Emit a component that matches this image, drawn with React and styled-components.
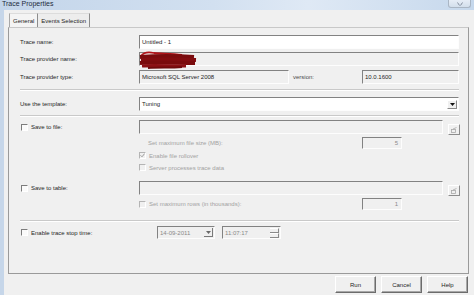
import React from "react";
import styled, { createGlobalStyle } from "styled-components";

const GlobalStyle = createGlobalStyle`
  html, body {
    margin: 0;
    padding: 0;
    background: #f0f0f0;
  }
  body {
    font-family: "Liberation Sans", Arial, sans-serif;
    font-size: 6px;
    color: #1e1e1e;
  }
`;

const Check = ({ checked, disabled }) => (
  <CheckBox $disabled={disabled}>
    {checked ? (
      <svg width="5" height="5" viewBox="0 0 5 5">
        <path d="M0.5 2.3 L2 3.8 L4.6 0.6" fill="none" stroke={disabled ? "#9c9c9c" : "#222"} strokeWidth="1" />
      </svg>
    ) : null}
  </CheckBox>
);

const Scribble = () => (
  <ScribbleSvg width="60" height="19" viewBox="0 0 60 19">
    <path d="M3 5 C6 1, 12 1, 16 2 C24 3, 34 2, 44 4" fill="none" stroke="#b3141a" strokeWidth="1.8" />
    <path d="M2 6 C14 5, 30 4, 56 6" fill="none" stroke="#7a0c0e" strokeWidth="4" />
    <path d="M3 9 C16 8, 36 8, 58 9" fill="none" stroke="#820d10" strokeWidth="4" />
    <path d="M2 12 C18 11, 40 12, 57 12" fill="none" stroke="#7a0b0d" strokeWidth="4" />
    <path d="M4 15 C14 14, 30 15, 48 15" fill="none" stroke="#8b1014" strokeWidth="3.2" />
    <path d="M10 17 C20 16, 32 17, 44 16" fill="none" stroke="#6f0a0c" strokeWidth="2" />
  </ScribbleSvg>
);

const BrowseIcon = () => (
  <svg width="6" height="6" viewBox="0 0 6 6">
    <rect x="0.5" y="2.5" width="4" height="3" fill="none" stroke="#a8a8a8" strokeWidth="0.8" />
    <path d="M2 2 L5.5 0.5" stroke="#a8a8a8" strokeWidth="0.8" />
  </svg>
);

const App = () => {
  return (
    <>
      <GlobalStyle />
      <Window>
        <TitleBar>
          <Title>Trace Properties</Title>
          <CloseButton>
            <svg width="6" height="4" viewBox="0 0 6 4">
              <path d="M0.5 0.5 L2.5 3.5 M5.5 0.5 L3.5 3.5" stroke="#7a8594" strokeWidth="0.9" />
            </svg>
          </CloseButton>
        </TitleBar>
        <Body>
          <TabStrip>
            <Tab $active>General</Tab>
            <Tab>Events Selection</Tab>
          </TabStrip>
          <Panel>
            <Row>
              <Label>Trace name:</Label>
              <Field $white>Untitled - 1</Field>
            </Row>
            <Row $mt={3}>
              <Label>Trace provider name:</Label>
              <Field $visible>
                <Scribble />
              </Field>
            </Row>
            <Row $mt={4}>
              <Label>Trace provider type:</Label>
              <TypeGrid>
                <Field>Microsoft SQL Server 2008</Field>
                <SideLabel>version:</SideLabel>
                <Field>10.0.1600</Field>
              </TypeGrid>
            </Row>
            <Separator $mt={5} />
            <Row $mt={6}>
              <Label>Use the template:</Label>
              <Field $white>
                <FieldText>Tuning</FieldText>
                <DropButton>
                  <svg width="5" height="3" viewBox="0 0 5 3">
                    <path d="M0 0 H5 L2.5 3 Z" fill="#111" />
                  </svg>
                </DropButton>
              </Field>
            </Row>
            <Separator $mt={4} />
            <Row $mt={3}>
              <CheckLabel>
                <Check />
                Save to file:
              </CheckLabel>
              <BrowseLine>
                <Field />
                <BrowseButton>
                  <BrowseIcon />
                </BrowseButton>
              </BrowseLine>
            </Row>
            <Row $mt={3} $h={12}>
              <span />
              <SubGrid>
                <SubText $indent={9}>Set maximum file size (MB):</SubText>
                <Field $num>5</Field>
              </SubGrid>
            </Row>
            <Row $mt={1} $h={11}>
              <span />
              <SubCheck>
                <Check checked disabled />
                Enable file rollover
              </SubCheck>
            </Row>
            <Row $mt={1} $h={11}>
              <span />
              <SubCheck>
                <Check disabled />
                Server processes trace data
              </SubCheck>
            </Row>
            <Row $mt={8}>
              <CheckLabel>
                <Check />
                Save to table:
              </CheckLabel>
              <BrowseLine>
                <Field />
                <BrowseButton>
                  <BrowseIcon />
                </BrowseButton>
              </BrowseLine>
            </Row>
            <Row $mt={3} $h={12}>
              <span />
              <SubGrid>
                <SubCheck>
                  <Check disabled />
                  Set maximum rows (in thousands):
                </SubCheck>
                <Field $num>1</Field>
              </SubGrid>
            </Row>
            <Separator $mt={10} />
            <Row $mt={4} $h={13}>
              <CheckLabel>
                <Check />
                Enable trace stop time:
              </CheckLabel>
              <StopLine>
                <Field $w={58} $dim>
                  <FieldText>14-09-2011</FieldText>
                  <PickerButton>
                    <svg width="5" height="3" viewBox="0 0 5 3">
                      <path d="M0 0 H5 L2.5 3 Z" fill="#6a6a6a" />
                    </svg>
                  </PickerButton>
                </Field>
                <Field $w={59} $dim>
                  <FieldText>11:07:17</FieldText>
                  <Spinner>
                    <SpinHalf />
                    <SpinHalf />
                  </Spinner>
                </Field>
              </StopLine>
            </Row>
          </Panel>
          <Footer>
            <Button>Run</Button>
            <Button>Cancel</Button>
            <Button>Help</Button>
          </Footer>
        </Body>
      </Window>
    </>
  );
};

export default App;

const Window = styled.div`
  width: 474px;
  height: 295px;
  overflow: hidden;
  display: flex;
  flex-direction: column;
  background: #f0f0f0;
`;

const TitleBar = styled.div`
  height: 10px;
  display: flex;
  justify-content: space-between;
  align-items: flex-start;
  padding: 0 3px 0 2px;
  background: linear-gradient(to right, #c3d5ea 0%, #d2e0f0 45%, #dfe9f5 65%, #c6d8ec 100%);
`;

const Title = styled.div`
  font-size: 7px;
  line-height: 7px;
  color: #1b2a3c;
`;

const CloseButton = styled.div`
  width: 23px;
  height: 8px;
  box-sizing: border-box;
  border: 1px solid #aab6c4;
  border-top: none;
  border-radius: 0 0 3px 3px;
  background: linear-gradient(#e6edf6, #d3dfec);
  display: flex;
  justify-content: center;
  align-items: center;
`;

const Body = styled.div`
  flex: 1;
  display: flex;
  flex-direction: column;
  border-left: 4px solid #c6d6e9;
  padding: 3px 5px 0 4px;
`;

const TabStrip = styled.div`
  display: flex;
  height: 14px;
  margin-left: 1px;
`;

const Tab = styled.div`
  height: 14px;
  box-sizing: border-box;
  padding: 0 3px;
  display: flex;
  align-items: center;
  background: ${(p) => (p.$active ? "#f4f4f4" : "#ededed")};
  border-top: 1px solid #dcdcdc;
  border-left: ${(p) => (p.$active ? "1px solid #a8a8a8" : "none")};
  border-right: 1px solid #8c8c8c;
  color: #1e1e1e;
`;

const Panel = styled.div`
  height: 247px;
  box-sizing: border-box;
  border: 1px solid #9a9a9a;
  border-top-color: #c8c8c8;
  padding: 7px 9px 0 11px;
  display: flex;
  flex-direction: column;
`;

const Row = styled.div`
  display: grid;
  grid-template-columns: 119px 1fr;
  align-items: center;
  height: ${(p) => p.$h || 14}px;
  margin-top: ${(p) => p.$mt || 0}px;
`;

const Label = styled.div`
  color: #1e1e1e;
  white-space: nowrap;
`;

const CheckLabel = styled.div`
  display: flex;
  align-items: center;
  gap: 3px;
  padding-left: 1px;
  white-space: nowrap;
`;

const CheckBox = styled.span`
  width: 7px;
  height: 7px;
  box-sizing: border-box;
  flex: none;
  display: inline-flex;
  align-items: center;
  justify-content: center;
  border-top: 1px solid ${(p) => (p.$disabled ? "#b4b4b4" : "#7c7c7c")};
  border-left: 1px solid ${(p) => (p.$disabled ? "#b4b4b4" : "#7c7c7c")};
  border-right: 1px solid #ffffff;
  border-bottom: 1px solid #ffffff;
  background: ${(p) => (p.$disabled ? "#f0f0f0" : "#fafafa")};
`;

const Field = styled.div`
  position: relative;
  height: 100%;
  width: ${(p) => (p.$w ? `${p.$w}px` : "auto")};
  box-sizing: border-box;
  display: flex;
  align-items: center;
  justify-content: ${(p) => (p.$num ? "flex-end" : "flex-start")};
  padding: ${(p) => (p.$num ? "0 3px 0 2px" : "0 0 0 2px")};
  background: ${(p) => (p.$white ? "#ffffff" : "#f0f0f0")};
  border-top: 1px solid #828282;
  border-left: 1px solid #828282;
  border-right: 1px solid #fdfdfd;
  border-bottom: 1px solid #fdfdfd;
  color: ${(p) => (p.$num || p.$dim ? "#8a8a8a" : "#1e1e1e")};
  overflow: ${(p) => (p.$visible ? "visible" : "hidden")};
  white-space: nowrap;
`;

const FieldText = styled.span`
  flex: 1;
`;

const ScribbleSvg = styled.svg`
  position: absolute;
  left: -2px;
  top: -2px;
`;

const TypeGrid = styled.div`
  display: grid;
  grid-template-columns: 150px 73px 1fr;
  height: 100%;
  align-items: center;
`;

const SideLabel = styled.div`
  padding-left: 4px;
  color: #4a4a4a;
`;

const Separator = styled.div`
  margin-top: ${(p) => p.$mt || 0}px;
  height: 0;
  border-top: 1px solid #c9c9c9;
  border-bottom: 1px solid #ffffff;
`;

const DropButton = styled.div`
  width: 10px;
  height: 9px;
  margin-right: 1px;
  box-sizing: border-box;
  display: flex;
  align-items: center;
  justify-content: center;
  background: #f0f0f0;
  border-top: 1px solid #fff;
  border-left: 1px solid #fff;
  border-right: 1px solid #8a8a8a;
  border-bottom: 1px solid #8a8a8a;
`;

const BrowseLine = styled.div`
  display: grid;
  grid-template-columns: 304px 12px;
  column-gap: 5px;
  height: 100%;
  align-items: end;
`;

const BrowseButton = styled.div`
  height: 11px;
  margin-bottom: -1px;
  box-sizing: border-box;
  display: flex;
  align-items: center;
  justify-content: center;
  background: #f0f0f0;
  border-top: 1px solid #ffffff;
  border-left: 1px solid #ffffff;
  border-right: 1px solid #8c8c8c;
  border-bottom: 1px solid #8c8c8c;
`;

const SubGrid = styled.div`
  display: grid;
  grid-template-columns: 223px 40px;
  height: 100%;
  align-items: center;
`;

const SubText = styled.div`
  padding-left: ${(p) => p.$indent || 0}px;
  color: #a2a2a2;
  white-space: nowrap;
`;

const SubCheck = styled.div`
  display: flex;
  align-items: center;
  gap: 3px;
  color: #a2a2a2;
  white-space: nowrap;
`;

const StopLine = styled.div`
  display: flex;
  gap: 7px;
  height: 100%;
  padding-left: 18px;
`;

const PickerButton = styled.div`
  width: 9px;
  height: 9px;
  margin-right: 1px;
  display: flex;
  align-items: center;
  justify-content: center;
  border-right: 1px solid #7a7a7a;
  border-bottom: 1px solid #7a7a7a;
  box-sizing: border-box;
`;

const Spinner = styled.div`
  width: 9px;
  height: 10px;
  margin-right: 1px;
  display: flex;
  flex-direction: column;
`;

const SpinHalf = styled.div`
  flex: 1;
  box-sizing: border-box;
  border-top: 1px solid #ffffff;
  border-right: 1px solid #8a8a8a;
  border-bottom: 1px solid #8a8a8a;
  background: #f0f0f0;
`;

const Footer = styled.div`
  display: flex;
  justify-content: flex-end;
  gap: 5px;
  margin-top: 2px;
  padding-right: 1px;
`;

const Button = styled.div`
  width: 41px;
  height: 17px;
  box-sizing: border-box;
  display: flex;
  align-items: center;
  justify-content: center;
  background: #f0f0f0;
  border-top: 1px solid #ffffff;
  border-left: 1px solid #ffffff;
  border-right: 1px solid #6c6c6c;
  border-bottom: 1px solid #6c6c6c;
  box-shadow: inset -1px -1px 0 #a8a8a8;
  color: #1e1e1e;
`;
